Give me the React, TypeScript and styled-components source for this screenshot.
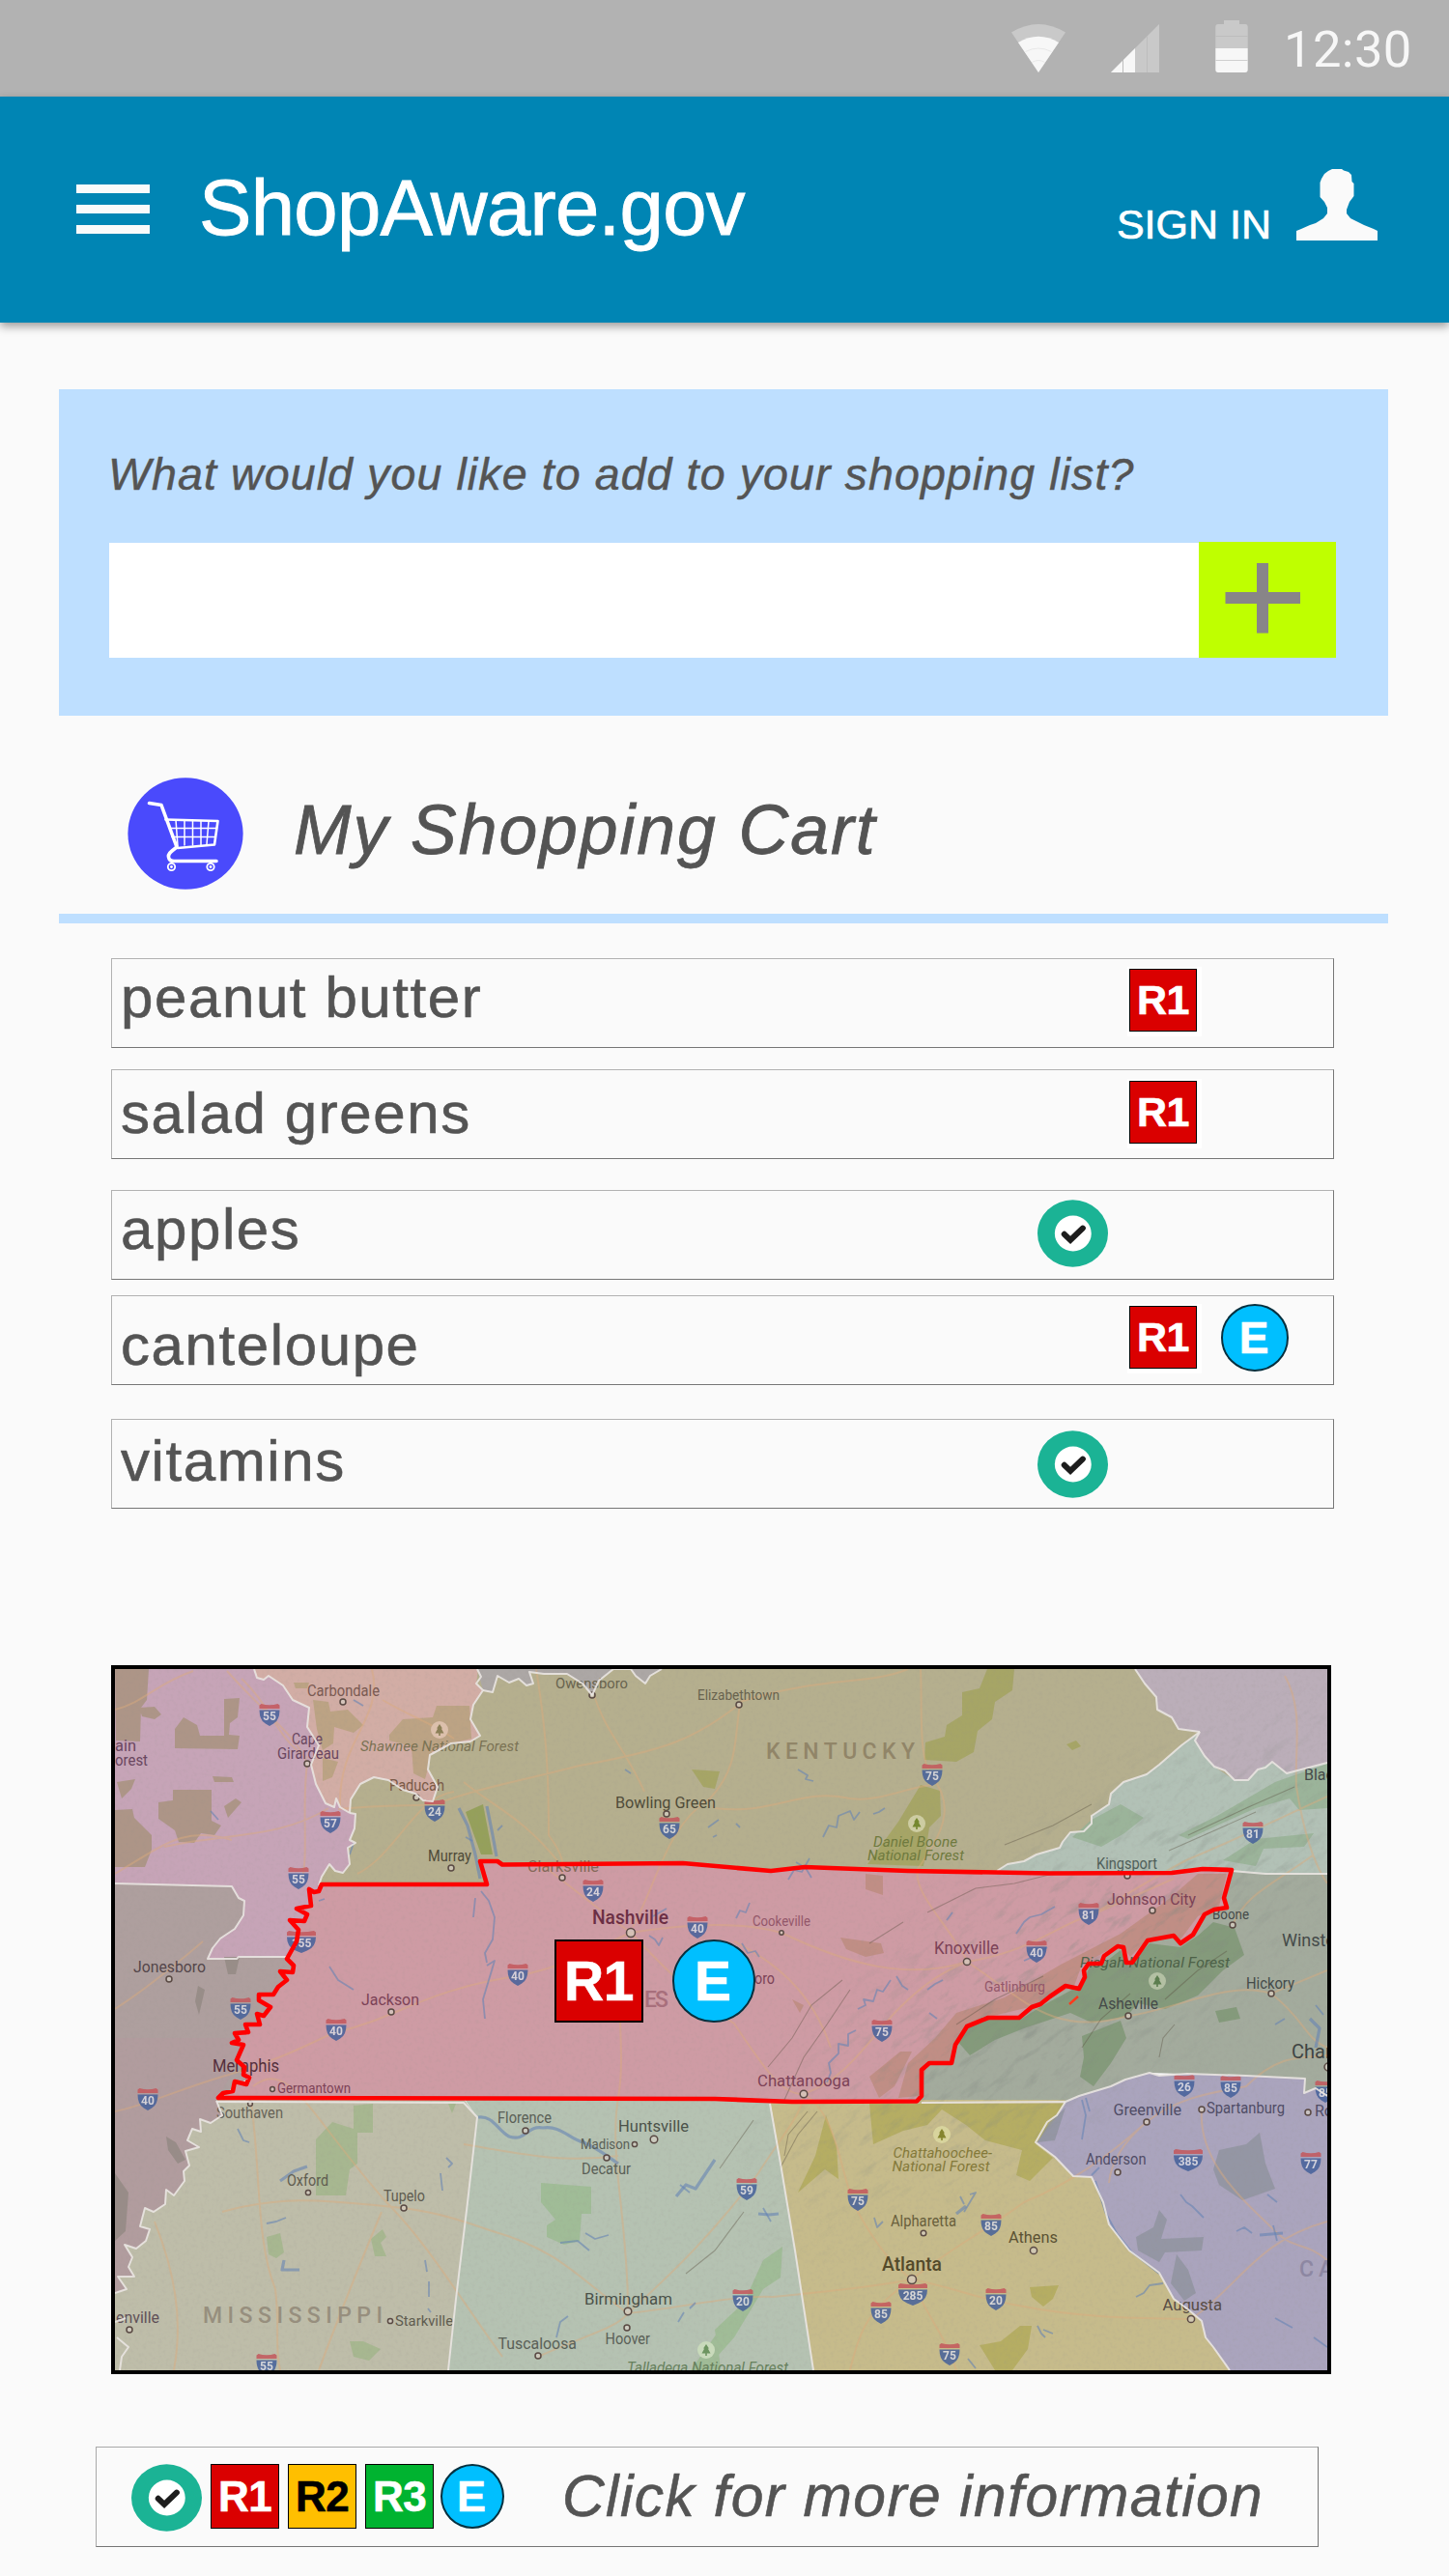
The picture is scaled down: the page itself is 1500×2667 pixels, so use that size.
import React from "react";
import styled, { createGlobalStyle } from "styled-components";

const sans = '"Liberation Sans", Arial, Helvetica, sans-serif';
const ink = "#545454";

const GlobalStyle = createGlobalStyle`
  html, body { margin: 0; padding: 0; background: #fafafa; }
  *, *::before, *::after { box-sizing: border-box; }
  button, input { font: inherit; border: 0; padding: 0; margin: 0; border-radius: 0; outline: 0; }
`;

const Screen = styled.div`
  width: 1500px;
  height: 2667px;
  overflow: hidden;
  background: #fafafa;
  font-family: ${sans};
  color: ${ink};
`;

/* ---------- status bar and app bar ---------- */

const StatusBar = styled.div`
  height: 100px;
  display: flex;
  justify-content: flex-end;
  align-items: flex-start;
  background: #b2b2b2;
`;

const StatusIcons = styled.svg`
  display: block;
  width: 262px;
  height: 100px;
`;

const Clock = styled.span`
  width: 198px;
  padding: 20px 0 0 27px;
  font: 400 52.5px/62px Roboto, sans-serif;
  letter-spacing: 0.4px;
  color: #f7f7f7;
`;

const AppBar = styled.header`
  height: 234px;
  display: flex;
  align-items: flex-start;
  padding: 0 74px 0 79px;
  background: #0085b4;
  box-shadow: 0 4px 9px rgba(0, 0, 0, 0.38);
`;

const MenuButton = styled.button`
  width: 76px;
  height: 51px;
  margin-top: 91px;
  display: flex;
  flex-direction: column;
  justify-content: space-between;
  background: none;
`;

const MenuBar = styled.span`
  height: 9px;
  background: #fafafa;
`;

const AppTitle = styled.h1`
  margin: 74px 0 0 51px;
  flex: 1;
  font-size: 81.5px;
  font-weight: 400;
  line-height: 1;
  letter-spacing: -0.7px;
  color: #fff;
  -webkit-text-stroke: 0.9px currentColor;
`;

const SignIn = styled.span`
  margin-top: 111px;
  font-size: 43px;
  line-height: 1;
  color: #fff;
  -webkit-text-stroke: 0.7px currentColor;
`;

const UserIcon = styled.svg`
  width: 84px;
  height: 74px;
  margin: 75px 0 0 26px;
`;

/* ---------- add panel ---------- */

const Main = styled.main`
  padding-top: 69px;
`;

const AddPanel = styled.section`
  width: 1376px;
  height: 338px;
  margin-left: 61px;
  padding: 65px 54px 0 52px;
  background: #bedfff;
`;

const Prompt = styled.p`
  margin: 0 0 0 -1px;
  font-size: 46.5px;
  font-style: italic;
  line-height: 46px;
  letter-spacing: 1.11px;
  white-space: nowrap;
  -webkit-text-stroke: 0.5px currentColor;
`;

const AddRow = styled.div`
  display: flex;
  align-items: flex-end;
  height: 120px;
  margin-top: 47px;
`;

const AddInput = styled.input`
  width: 1128px;
  height: 119px;
  background: #fff;
`;

const AddButton = styled.button`
  width: 142px;
  height: 120px;
  background: #bfff00;
`;

const PlusIcon = styled.svg`
  display: block;
  width: 142px;
  height: 120px;
`;

/* ---------- cart ---------- */

const CartHeading = styled.div`
  width: 1376px;
  height: 215px;
  margin-left: 61px;
  padding: 64px 0 0 71px;
  display: flex;
  border-bottom: 10px solid #bedfff;
`;

const CartIcon = styled.svg`
  width: 120px;
  height: 116px;
`;

const CartTitle = styled.h2`
  margin: 19px 0 0 52px;
  font-size: 71.5px;
  font-weight: 400;
  font-style: italic;
  line-height: 1;
  letter-spacing: 1.95px;
  -webkit-text-stroke: 0.8px currentColor;
`;

const List = styled.ul`
  list-style: none;
  margin: 36px 0 0 115px;
  padding: 0;
  width: 1266px;
`;

const Item = styled.li<{ $gap: number }>`
  height: 93px;
  margin-bottom: ${(p) => p.$gap}px;
  display: grid;
  grid-template-columns: 957.5px 95.5px 95px 1fr;
  align-items: start;
  border: 1px solid #b2b2b2;
  border-right-color: #767676;
  border-bottom-color: #767676;
`;

const ItemName = styled.span<{ $top: number }>`
  padding: ${(p) => p.$top}px 0 0 9px;
  font-size: 60px;
  line-height: 60px;
  letter-spacing: 1.6px;
  white-space: nowrap;
  -webkit-text-stroke: 0.6px currentColor;
`;

const Slot = styled.span<{ $top: number }>`
  display: block;
  padding-top: ${(p) => p.$top}px;
`;

/* ---------- badges ---------- */

const CheckSvg = styled.svg`
  display: block;
  width: 73px;
  height: 70px;
`;

const LevelBadge = styled.span<{ $w: number; $h: number; $size: number; $tone: string; $fg?: string; $halo?: boolean }>`
  display: flex;
  align-items: center;
  justify-content: center;
  width: ${(p) => p.$w}px;
  height: ${(p) => p.$h}px;
  border: ${(p) => (p.$w > 80 ? 2 : 1.5)}px solid #000;
  background: ${(p) => p.$tone};
  color: ${(p) => p.$fg ?? "#fff"};
  font-size: ${(p) => p.$size}px;
  font-weight: 700;
  line-height: 1;
  letter-spacing: -0.5px;
  -webkit-text-stroke: 0.6px currentColor;
  box-shadow: ${(p) => (p.$halo ? "1.5px 1.5px 0 3.5px #fff" : "none")};
`;

const EventBadge = styled.span<{ $w: number; $h: number; $size: number }>`
  display: flex;
  align-items: center;
  justify-content: center;
  width: ${(p) => p.$w}px;
  height: ${(p) => p.$h}px;
  border: 2px solid #06303f;
  border-radius: 50%;
  background: #00bfff;
  color: #fff;
  font-size: ${(p) => p.$size}px;
  font-weight: 700;
  line-height: 1;
  padding-right: 2px;
  -webkit-text-stroke: 0.6px currentColor;
`;

const CheckBadge = () => (
  <CheckSvg viewBox="0 0 72 70" preserveAspectRatio="none">
    <ellipse cx="36" cy="35" rx="36" ry="34.7" fill="#1bb395" />
    <ellipse cx="36.3" cy="35" rx="18.7" ry="18.5" fill="#fff" />
    <path d="M27.4 35.8 L33.6 41.8 L46.2 29.6" fill="none" stroke="#1d1d1d" strokeWidth="6" strokeLinecap="round" />
  </CheckSvg>
);

/* ---------- map ---------- */

const MapFrame = styled.section`
  position: relative;
  width: 1263px;
  height: 734px;
  margin: 162px 0 0 115px;
  border: 4px solid #000;
  overflow: hidden;
`;

const MapSvg = styled.svg`
  display: block;
  width: 1255px;
  height: 726px;
  font-family: Roboto, sans-serif;
`;

const MapBadges = styled.div`
  position: absolute;
  left: 455px;
  top: 280px;
  display: flex;
  gap: 30px;
`;

const TN =
  "M497 1927 L504 1951 L333 1951 L330 1958 L325 1959 L320 1956 L322 1973 L307 1976 L318 1982 L315 1989 L300 1988 L309 1998 L307 2010 L297 2028 L304 2035 L303 2042 L290 2041 L297 2050 L288 2057 L283 2065 L268 2065 L268 2071 L280 2078 L273 2087 L266 2085 L269 2096 L254 2096 L257 2104 L243 2105 L247 2112 L240 2115 L252 2117 L245 2133 L253 2140 L252 2148 L258 2151 L255 2158 L243 2155 L241 2165 L231 2167 L226 2172 L740 2173 L820 2176 L949 2175.5 L954 2170 L954 2143 L962 2136 L985 2136 L989 2117 L1001 2098 L1023 2089 L1055 2089 L1068 2078 L1077 2075 L1087 2067 L1103 2056 L1117 2059 L1123 2047 L1122 2040 L1127 2033 L1140 2033 L1143 2025 L1157 2015 L1163 2016 L1166 2032 L1172 2032 L1188 2009 L1215 2004 L1222 2012 L1235 2003 L1247 1982 L1257 1977 L1270 1975 L1267 1965 L1275 1936 L1245 1935 L1213 1939 L1087 1939.5 L940 1937 L833 1933 L798 1937 L707 1929 L520 1930.5 L515 1927 Z";

const MO_IL =
  "L263 1728 L266 1737 L273 1739 L278 1735 L293 1745 L303 1760 L320 1768 L318 1788 L330 1807 L322 1827 L327 1847 L337 1867 L346 1871 L348 1862 L352 1871 L362 1877";
const MO_KY =
  "L368 1878 L367 1893 L362 1905 L368 1908 L360 1913 L362 1930 L355 1939 L347 1937 L341 1930 L333 1943 L330 1952";
const IL_KY =
  "L363 1863 L373 1847 L387 1840 L402 1843 L417 1853 L430 1857 L438 1864 L448 1865 L453 1850 L443 1832 L445 1817 L467 1805 L487 1803 L497 1797 L487 1780 L490 1765 L500 1750";
const IN_KY =
  "L500 1750 L510 1752 L515 1735 L527 1742 L537 1738 L545 1745 L552 1743 L548 1731 L563 1733 L587 1733 L603 1743 L613 1755 L620 1740 L635 1728 L653 1728 L658 1735 L668 1743 L673 1735 L685 1728";
const AR_MS =
  "L224 2175 L230 2190 L218 2198 L207 2194 L208 2207 L199 2204 L194 2216 L206 2223 L192 2227 L196 2242 L190 2248 L191 2258 L180 2273 L172 2267 L171 2282 L159 2290 L150 2286 L145 2305 L155 2308 L151 2320 L141 2328 L129 2324 L137 2337 L133 2347 L139 2357 L122 2357 L131 2370 L119 2374";
const KY_VA =
  "L1242 1793 L1223 1807 L1200 1827 L1187 1837 L1163 1845 L1150 1857 L1148 1868 L1130 1880 L1130 1888 L1122 1896 L1108 1897 L1100 1907 L1097 1913 L1073 1920 L1060 1927 L1043 1930 L1032 1937";
const KY_WV = "L1175 1728 L1185 1743 L1197 1757 L1198 1770 L1213 1778 L1220 1790 L1242 1793";
const WV_VA =
  "L1237 1802 L1247 1818 L1257 1829 L1268 1833 L1278 1843 L1292 1843 L1302 1832 L1310 1830 L1317 1824 L1332 1836 L1347 1832 L1374 1825";
const NC_SC =
  "L1103 2176 L1117 2170 L1150 2160 L1165 2153 L1190 2146 L1200 2149 L1229 2147 L1290 2149 L1351 2152 L1350 2167 L1362 2162 L1374 2170";
const GA_SC =
  "L1103 2176 L1094 2190 L1084 2197 L1072 2218 L1092 2233 L1111 2253 L1130 2254 L1142 2280 L1148 2303 L1169 2330 L1200 2353 L1215 2380 L1230 2391 L1244 2403 L1248 2420 L1256 2430 L1273 2454";
const MO_AR =
  "L119 1950 L240 1953 L247 1965 L253 1968 L252 1983 L243 1997 L228 2007 L220 2017 L215 2028 L245 2028 L247 2026 L297 2026";

const start = (line: string) => "M" + line.slice(1);

const regions: [string, string][] = [
  ["#b5af8e", "M119 1728 H1374 V2000 H119 Z"],
  ["#c6a4b7", `M119 1728 ${MO_IL} ${MO_KY} L330 2030 L297 2026 L119 2100 Z`],
  ["#ae9f9e", `${start(MO_AR)} L310 2026 L300 2110 L258 2151 L226 2172 L119 2176 Z`],
  ["#b19c9e", `M119 2110 L260 2110 L226 2172 ${AR_MS} Z`],
  ["#d2ada5", `${start(MO_IL)} ${IL_KY} L493 1743 L495 1728 Z`],
  ["#aca7a5", `${start(IN_KY)} L494 1728 Z`],
  ["#bbaeb9", `${start(KY_WV)} ${WV_VA} L1374 1728 Z`],
  ["#b2c1b6", `${start(KY_VA)} L1275 1940 L1374 1941 L1374 1825 L1347 1832 L1332 1836 L1317 1824 L1302 1832 L1292 1843 L1278 1843 L1257 1829 L1247 1818 L1237 1802 Z`],
  ["#a3ab9d", `M1270 1936 L1310 1940 L1374 1941 L1374 2172 L1362 2162 L1350 2167 L1351 2152 L1290 2149 L1190 2146 L1150 2160 L1103 2176 L945 2177 L945 2100 Z`],
  ["#bebda9", `M224 2172 ${AR_MS} L119 2454 L464 2454 L472 2380 L484 2280 L494 2192 L480 2173 Z`],
  ["#b5c2b2", `M480 2172 L494 2192 L484 2280 L472 2380 L464 2454 L842 2454 L823 2330 L808 2240 L797 2174 Z`],
  ["#c6bb8b", `M797 2174 L808 2240 L823 2330 L842 2454 L1273 2454 L1256 2430 L1248 2420 L1244 2403 L1215 2380 L1200 2353 L1169 2330 L1148 2303 L1142 2280 L1130 2254 L1111 2253 L1092 2233 L1072 2218 L1084 2197 L1094 2190 L1103 2174 Z`],
  ["#aaa4bd", `${start(NC_SC)} L1374 2454 L1273 2454 L1256 2430 L1248 2420 L1244 2403 L1215 2380 L1200 2353 L1169 2330 L1148 2303 L1142 2280 L1130 2254 L1111 2253 L1092 2233 L1072 2218 L1084 2197 L1094 2190 Z`],
  ["#ce9ba4", TN],
];

const borders = [
  start(MO_IL), `M362 1877 ${MO_KY}`, `M362 1877 ${IL_KY} L493 1743 L498 1736 L494 1728`, start(IN_KY), start(MO_AR), start(AR_MS),
  start(KY_VA), start(KY_WV), `M1242 1793 ${WV_VA}`, start(NC_SC), start(GA_SC),
  "M1275 1937 L1310 1940 L1374 1940", "M954 2177 L1103 2176", "M224 2176 L480 2177 L494 2192 L484 2280 L472 2380 L464 2454",
  "M797 2178 L808 2240 L823 2330 L842 2454", "M130 2400 L119 2404 M121 2420 L133 2430 L126 2440 L124 2454",
];

const parks: [string, string][] = [
  ["#a8937f", "M119 1728 L154 1728 L152 1760 L146 1768 L145 1803 L120 1802 Z M144 1768 L160 1767 L167 1775 L160 1780 L147 1777 Z M232 1759 L248 1758 L246 1778 L238 1784 L237 1796 L248 1797 L246 1811 L181 1810 L181 1790 L190 1778 L204 1786 L207 1797 L232 1797 Z M179 1853 L219 1853 L219 1885 L229 1890 L222 1900 L208 1898 L201 1908 L185 1907 L181 1895 L164 1883 L164 1866 L179 1864 Z M119 1874 L137 1873 L139 1882 L157 1900 L157 1915 L150 1933 L119 1933 Z M232 1870 L244 1862 L250 1866 L236 1882 Z M220 1839 L240 1840 L242 1845 L222 1845 Z M121 1845 L140 1842 L136 1852 L126 1862 Z"],
  ["#b8a17e", "M324 1760 L340 1762 L342 1772 L360 1770 L376 1786 L366 1794 L346 1788 L345 1805 L334 1812 L328 1790 Z M334 1820 L350 1824 L344 1840 L334 1844 Z M403 1796 L417 1780 L448 1778 L452 1766 L486 1766 L488 1800 L463 1806 L448 1812 L440 1842 L428 1836 L426 1808 L403 1802 Z M304 1742 L320 1742 L318 1748 L306 1748 Z"],
  ["#a3a35f", "M1022 1728 L1050 1728 L1048 1750 L1030 1762 L1027 1780 L1012 1792 L1008 1814 L990 1824 L957 1822 L958 1804 L978 1798 L980 1786 L996 1776 L996 1752 L1014 1748 Z M953 1848 L973 1854 L974 1880 L962 1892 L956 1932 L898 1930 L930 1886 Z M716 1832 L745 1834 L740 1852 L728 1850 Z M1104 1806 L1114 1802 L1119 1808 L1110 1812 Z"],
  ["#8f9e52", "M482 1876 L500 1868 L510 1920 L498 1920 Z"],
  ["#96b295", "M1130 1884 L1160 1868 L1184 1882 L1164 1898 L1140 1912 L1110 1902 Z M1220 1900 L1260 1880 L1320 1845 L1374 1826 L1374 1872 L1345 1874 L1335 1862 L1300 1872 L1260 1890 L1230 1904 Z M1266 1926 L1300 1904 L1360 1898 L1350 1912 L1308 1914 L1300 1932 Z"],
  ["#7f9675", "M990 2112 L1003 2098 L1023 2091 L1056 2091 L1080 2076 L1110 2060 L1118 2061 L1128 2036 L1146 2030 L1160 2019 L1168 2036 L1190 2012 L1222 2016 L1240 2004 L1256 1990 L1278 1996 L1288 2024 L1266 2040 L1240 2066 L1206 2080 L1178 2074 L1166 2088 L1130 2094 L1108 2084 L1060 2100 L1030 2112 L1004 2128 Z M1120 2108 L1160 2092 L1166 2110 L1150 2136 L1132 2160 L1118 2150 L1122 2130 Z M1258 2082 L1280 2078 L1284 2090 L1262 2094 Z"],
  ["#bd8c80", "M1240 1940 L1270 1940 L1262 1974 L1240 1984 L1222 2008 L1190 2006 L1170 2026 L1160 2012 L1120 2034 L1112 2056 L1066 2078 L1024 2088 L1000 2096 L984 2134 L960 2136 L952 2170 L930 2172 L940 2136 L968 2110 L990 2084 L1040 2068 L1098 2034 L1160 2002 L1210 1966 Z M870 2006 L912 2012 L915 2022 L896 2026 L876 2018 Z M896 1940 L914 1942 L914 1962 L896 1956 Z M820 2070 L832 2076 L828 2084 Z M900 2150 L932 2124 L944 2124 L926 2160 L910 2172 Z"],
  ["#a3b68c", "M366 2180 L386 2178 L386 2208 L370 2208 L370 2240 L362 2246 L358 2273 L327 2273 L327 2215 L344 2197 L366 2204 Z M276 2316 L290 2312 L294 2332 L286 2338 L278 2334 Z M384 2318 L396 2308 L400 2316 L394 2322 L400 2336 L388 2336 Z M362 2424 L376 2424 L394 2432 L382 2444 L366 2440 Z M464 2178 L472 2178 L468 2188 Z"],
  ["#9cbb92", "M560 2260 L612 2264 L612 2292 L602 2292 L600 2320 L584 2324 L566 2316 L566 2304 L575 2298 L560 2280 Z M790 2340 L810 2326 L808 2358 L790 2370 L760 2420 L744 2438 L740 2412 L770 2384 Z M715 2454 L742 2416 L746 2454 Z"],
  ["#b1aa5c", "M900 2178 L1102 2178 L1094 2192 L1072 2220 L1090 2234 L1066 2258 L1052 2252 L1058 2226 L1020 2216 L1000 2200 L975 2184 L960 2200 L935 2206 L904 2220 Z M855 2190 L866 2222 L868 2256 L854 2246 L826 2270 L844 2232 Z M1066 2368 L1096 2366 L1090 2380 L1080 2388 L1068 2378 Z M1014 2428 L1036 2424 L1056 2408 L1068 2408 L1064 2432 L1048 2454 L1030 2454 Z"],
  ["#9094a0", "M1103 2182 L1092 2216 L1074 2218 L1086 2198 Z M1262 2226 L1290 2220 L1304 2208 L1310 2240 L1320 2266 L1286 2278 L1262 2262 L1256 2246 Z M1200 2288 L1208 2298 L1202 2318 L1246 2316 L1244 2330 L1206 2332 L1200 2342 L1178 2330 L1176 2316 L1194 2306 Z M1218 2334 L1230 2350 L1238 2374 L1226 2382 L1212 2364 Z"],
  ["#948a84", "M232 2026 L248 2026 L244 2044 L236 2044 Z M205 2056 L212 2060 L206 2086 L202 2072 Z M172 2212 L182 2218 L192 2236 L184 2240 L174 2226 Z M119 2250 L133 2270 L130 2310 L119 2320 Z"],
];

const roads =
  "M119 1770 C150 1762 160 1744 200 1730 M235 1730 C270 1770 310 1800 318 1826 C312 1870 320 1920 312 1950 M170 1912 C230 1898 290 1904 340 1872 M119 1940 C170 1910 190 1890 240 1905 M250 1738 C280 1765 286 1800 318 1820 M385 1728 C398 1780 350 1800 352 1870 M396 1760 C430 1780 440 1780 470 1800 M350 1873 C400 1868 430 1870 450 1868 C500 1850 530 1846 600 1828 C690 1812 720 1800 766 1764 M555 1728 C565 1790 568 1830 568 1900 C590 1930 580 1935 582 1944 M615 1755 C625 1790 650 1815 667 1855 M766 1765 C760 1800 765 1830 735 1862 C690 1890 680 1950 655 1995 M740 1872 C800 1880 830 1850 880 1862 C910 1866 940 1850 965 1848 M480 1845 C510 1870 540 1880 580 1930 M370 1940 C410 1920 430 1860 470 1855 M953 1728 C955 1770 950 1820 965 1840 C990 1870 975 1900 950 1935 C945 1960 980 1990 1001 2030 M766 1762 C850 1735 900 1745 940 1728 M119 2080 C150 2060 175 2040 210 2010 M119 2186 C150 2180 180 2165 230 2150 C300 2130 330 2110 348 2104 C410 2090 440 2060 535 2046 C590 2035 620 2015 653 2001 C720 1990 770 1990 809 2001 C880 2035 940 2050 1001 2031 C1070 2020 1100 1990 1127 1984 L1215 1945 M653 2001 C690 2040 720 2070 760 2095 C790 2140 810 2170 832 2168 M653 2001 C630 2060 650 2110 640 2172 C630 2230 650 2300 650 2390 M653 2001 C610 1970 600 1960 560 1930 M832 2168 C880 2150 900 2110 930 2080 C960 2050 980 2040 1001 2031 C1060 2070 1090 2110 1168 2087 C1220 2080 1270 2050 1316 2064 L1374 2040 M260 2176 C270 2250 265 2320 285 2370 C290 2410 284 2430 290 2454 M262 2160 C300 2130 320 2190 400 2280 C440 2320 470 2370 520 2440 M230 2290 C300 2270 350 2280 418 2286 C460 2292 480 2300 510 2310 C580 2330 600 2360 650 2395 C700 2350 740 2310 785 2250 C810 2210 830 2190 832 2168 C870 2190 870 2260 888 2290 C910 2330 930 2350 944 2360 C960 2400 980 2420 990 2454 M650 2395 C700 2390 760 2376 800 2378 C860 2372 900 2368 944 2360 C980 2366 1010 2380 1060 2388 C1120 2400 1180 2400 1233 2401 M944 2360 C980 2330 1020 2310 1060 2280 C1110 2260 1150 2230 1187 2197 C1220 2170 1260 2166 1290 2160 C1320 2130 1340 2130 1374 2128 M557 2440 C600 2420 640 2410 650 2395 M944 2360 C900 2390 890 2410 880 2454 M1244 2184 C1240 2240 1290 2280 1320 2310 C1340 2330 1350 2320 1374 2340 M1233 2401 C1280 2370 1300 2320 1374 2300 M1187 2197 C1160 2220 1150 2240 1148 2260 M1374 1860 C1330 1880 1290 1900 1230 1925 C1200 1940 1170 1960 1127 1984 M1330 1735 C1350 1770 1340 1810 1342 1850 C1350 1900 1360 1930 1374 1950 M1276 1993 C1290 1960 1320 1950 1360 1920 M860 2120 C840 2060 800 2030 760 2010 M480 2220 C540 2230 580 2240 640 2232 M1316 2064 C1350 2090 1350 2110 1374 2120 M160 2300 C180 2350 190 2400 180 2454 M395 2290 C370 2350 350 2400 330 2454";

/* wide lakes and the Tennessee River */
const lakes =
  "M475 1872 L484 1890 L492 1920 L497 1945 M504 1870 L510 1900 L514 1922 M495 2192 C510 2190 515 2205 527 2212 C545 2218 545 2200 562 2203 C580 2200 590 2215 604 2218 C620 2225 625 2230 640 2240 M700 2274 L710 2262 L720 2266 L740 2236 M290 2258 L304 2248 L318 2243 M294 2340 L292 2350 L310 2350 M785 2292 L796 2293 L806 2292 M1304 2314 L1328 2312 M990 2292 L1000 2284 M1356 2090 L1366 2100 L1362 2120";

const water =
  "M515 1895 L520 1890 M482 1902 L489 1906 M498 1958 L506 1968 L512 1985 L510 2008 L502 2022 L504 2032 M504 2035 L512 2030 L506 2050 L500 2070 L502 2090 M492 1965 L490 1985 M704 2262 L714 2270 M246 2204 L252 2216 L258 2218 M276 2302 L286 2300 L296 2296 M462 2234 L468 2240 L464 2244 M440 2340 L442 2352 M444 2362 L444 2378 M443 2390 L446 2394 M456 2250 L458 2268 M580 2322 L598 2320 L610 2330 M606 2312 L616 2318 L630 2314 M702 2404 L708 2394 M714 2390 L720 2384 M576 2420 L580 2404 L588 2398 M790 2286 L798 2300 M852 1902 L858 1890 L866 1892 L868 1880 L880 1875 L884 1884 L890 1876 M904 1878 L910 1876 L916 1872 M826 1832 L836 1838 L834 1842 L842 1844 M733 1892 L744 1884 M738 1902 L742 1900 M816 1946 L822 1936 L830 1938 L838 1924 M824 1928 L834 1934 L840 1944 M762 1986 L766 1978 L772 1980 L776 1970 M672 2004 L678 2008 L682 2014 L686 2006 M768 2012 L774 2022 L782 2020 L786 2026 M676 1984 L690 1976 M888 2080 L896 2076 L894 2070 L904 2072 L908 2060 L914 2062 L922 2050 M928 2046 L934 2056 L940 2060 M856 2156 L860 2146 L858 2136 L868 2126 L868 2116 L878 2118 L878 2106 L886 2102 M980 1988 L986 1980 M1052 2002 L1060 1990 L1066 1985 L1078 1982 L1092 1974 M1060 2030 L1074 2024 L1084 2016 M960 2060 L968 2054 L976 2050 M962 2084 L970 2090 M1120 2174 L1124 2190 L1120 2215 M1124 2172 L1128 2186 M1130 2252 L1134 2248 L1138 2244 M1134 2258 L1144 2290 L1156 2312 L1172 2332 L1200 2354 M998 2290 L1010 2270 L1004 2272 M994 2274 L998 2282 M905 2296 L908 2306 L914 2300 M1176 2378 L1184 2374 L1190 2366 L1204 2364 M1222 2272 L1228 2280 L1234 2284 L1246 2296 M1280 2310 L1288 2306 L1296 2312 M1318 2304 L1322 2320 M1312 2272 L1322 2280 M1362 2076 L1370 2086 M1320 2096 L1330 2090 M1074 2408 L1078 2416 L1082 2420 M1080 2412 L1090 2416 M1002 2442 L1010 2452 M1320 2400 L1338 2410 M1360 2420 L1374 2430 M218 1875 L226 1884 M330 1968 L336 1966 M362 1920 L366 1908 M647 1832 L653 1836 M762 1888 L766 1892 M341 2036 L350 2050 L366 2060 M366 1760 L376 1766";

const ridges =
  "M795 2140 L820 2110 L840 2076 L872 2050 M812 2174 L832 2130 L856 2096 L880 2060 M808 2244 L826 2210 L846 2186 M812 2232 L816 2210 L836 2186 M960 1980 L1010 1955 L1050 1950 L1090 1940 M1040 1910 L1090 1890 L1130 1868 M1210 1916 L1260 1894 L1300 1876 M1230 1900 L1290 1872 L1340 1850 M900 2012 L935 1990 M1200 2130 L1204 2110 L1216 2096 M710 2354 L740 2330 L770 2290 M745 2245 L780 2195 M990 2096 L1030 2070 L1080 2046 M1120 2120 L1140 2090 L1170 2064 M1206 2070 L1240 2040 L1270 2020";

type Shield = [number, number, string];
const shields: Shield[] = [
  [279, 1776, "55"], [342, 1887, "57"], [450, 1875, "24"], [309, 1945, "55"], [312, 2011, "155"], [249, 2080, "55"],
  [348, 2102, "40"], [536, 2045, "40"], [693, 1893, "65"], [614, 1958, "24"], [722, 1996, "40"], [913, 2103, "75"],
  [965, 1838, "75"], [1297, 1898, "81"], [1127, 1982, "81"], [1073, 2021, "40"], [153, 2174, "40"], [276, 2449, "55"],
  [773, 2267, "59"], [888, 2278, "75"], [1026, 2304, "85"], [769, 2382, "20"], [945, 2376, "285"], [1031, 2381, "20"],
  [912, 2395, "85"], [983, 2438, "75"], [1226, 2160, "26"], [1274, 2161, "85"], [1230, 2237, "385"], [1357, 2240, "77"], [1372, 2166, "85"],
];

const olive = "#4f4b39";
const plum = "#6a4760";
const wine = "#7c4257";
const slate = "#454a49";
const forest = "#6f7a3e";

/* x, baseline, text, drawn width (0 keeps the natural one), size, colour, style */
type Place = [number, number, string, number, number, string, string?];
const places: Place[] = [
  [318, 1756, "Carbondale", 75, 16, "#7a5a52"], [302, 1806, "Cape", 32, 16, plum], [287, 1820.5, "Girardeau", 64, 16, plum],
  [373, 1813, "Shawnee National Forest", 164, 15.5, "#7b7355", "italic"], [403, 1854, "Paducah", 57, 16, "#7a5a48"],
  [443, 1927, "Murray", 45, 16, olive], [119, 1812.5, "ain", 22, 16, plum], [119, 1828, "orest", 34, 16, plum],
  [138, 2042, "Jonesboro", 75, 16.5, "#54464a"], [374, 2075.5, "Jackson", 60, 16.5, wine],
  [575, 1748, "Owensboro", 75, 15.5, "#68634e"], [722, 1760, "Elizabethtown", 85, 15.5, "#68634e"],
  [793, 1820.5, "KENTUCKY", 159, 23, "#918568", "state"], [637, 1872, "Bowling Green", 104, 17, olive],
  [904, 1911.5, "Daniel Boone", 87, 15.5, forest, "italic"], [898, 1926, "National Forest", 100, 15.5, forest, "italic"],
  [546, 1937.5, "Clarksville", 74, 16, "#85695a"], [613, 1991.5, "Nashville", 79, 20, "#6b2f45", "bold"],
  [779, 1994, "Cookeville", 60, 15, "#93576a"], [781, 2054, "oro", 21, 16, wine], [667, 2077.5, "ES", 30, 23, "#a86f7c", "state"],
  [1135, 1935, "Kingsport", 63, 16, "#50605a"], [1146, 1971.5, "Johnson City", 92, 16.5, wine],
  [1255, 1986.5, "Boone", 38, 15.5, slate], [1327, 2015, "Winston", 0, 18, slate], [1290, 2059, "Hickory", 50, 16, slate],
  [1137, 2079.5, "Asheville", 62, 16.5, slate], [1118, 2036.5, "Pisgah National Forest", 155, 15.5, "#4d6148", "italic"],
  [967, 2023, "Knoxville", 67, 17.5, wine], [1019, 2062, "Gatlinburg", 63, 15.5, "#93576a"], [1350, 1843, "Blacks", 0, 16, slate],
  [220, 2145, "Memphis", 69, 18, "#542f3c"], [287, 2166.5, "Germantown", 76, 14.5, wine], [224, 2192.5, "Southaven", 69, 16, "#686357"],
  [515, 2197.5, "Florence", 56, 16, "#5a6057"], [640, 2207, "Huntsville", 73, 17, "#4b524a"], [601, 2225, "Madison", 51, 15, "#5a6057"],
  [602, 2250.5, "Decatur", 51, 16, "#5a6057"], [297, 2262.5, "Oxford", 43, 16, "#5f5c50"], [397, 2279, "Tupelo", 43, 16, "#5f5c50"],
  [605, 2385.5, "Birmingham", 91, 17, "#4b524a"], [409, 2408, "Starkville", 60, 15.5, "#5f5c50"],
  [210, 2405, "MISSISSIPPI", 191, 23, "#978f7e", "state"], [120, 2405, "enville", 45, 16, "#5f5058"],
  [515.5, 2431.5, "Tuscaloosa", 81.5, 16.5, "#5a6057"], [626.5, 2427, "Hoover", 46.5, 16, "#5a6057"],
  [649, 2457, "Talladega National Forest", 167, 16, "#66805c", "italic"], [784, 2159.5, "Chattanooga", 96, 17, wine],
  [1152.5, 2189.5, "Greenville", 70.5, 16, "#504d66"], [1249, 2188, "Spartanburg", 81, 16, "#504d66"],
  [1361, 2191, "Rock", 0, 16, "#504d66"], [1337, 2131, "Charlotte", 0, 20, "#3f4443"], [1124, 2240.5, "Anderson", 62.5, 16, "#504d66"],
  [924.5, 2233.5, "Chattahoochee-", 102.5, 15.5, "#84793a", "italic"], [923.5, 2247.5, "National Forest", 101, 15.5, "#84793a", "italic"],
  [922, 2305, "Alpharetta", 68, 16, "#695f3c"], [1044, 2322, "Athens", 51, 16.5, "#5b5234"], [913, 2350.5, "Atlanta", 62, 20, "#544a2a", "bold"],
  [1203.5, 2391.5, "Augusta", 61.5, 16.5, "#574c45"], [1345, 2356.5, "CAR", 0, 23, "#8d87a2", "state"],
];

const towns: [number, number, number?][] = [
  [355, 1762], [175, 2049], [405, 2083], [467, 1934], [431, 1861], [318, 1826], [613, 1755], [765, 1765], [690, 1878], [582, 1944],
  [653, 2001, 4.5], [809, 2001, 2.2], [1167, 1942], [1193, 1978], [1276, 1993], [1001, 2031, 3.6], [1316, 2064], [1168, 2087], [282, 2163, 2.4],
  [259, 2178, 2.4], [544, 2206], [677, 2215, 3.8], [657, 2220, 2.6], [628, 2234], [319, 2270, 2.6], [418, 2286], [650, 2393, 3.8], [649, 2410],
  [557, 2439], [404, 2403, 2.6], [134, 2412], [832, 2168, 3.8], [1187, 2197], [1244, 2184], [1354, 2187], [1157, 2249], [956, 2312, 2.8],
  [1070, 2330, 3.6], [944, 2360, 4.5], [1233, 2401, 3.6], [1375, 2140, 4],
];

const trees: [number, number, string, string][] = [
  [455, 1791, "#dcc0ac", "#8b7f57"], [949, 1888, "#cdcca2", "#75882f"], [1198, 2051, "#b3c0a3", "#5c7d4f"],
  [975, 2210, "#d8d49d", "#85852f"], [731, 2433, "#c9dabb", "#6d9460"],
];

const RoadShield = ({ x, y, label }: { x: number; y: number; label: string }) => {
  const w = label.length > 2 ? 15 : 10.5;
  return (
    <g transform={`translate(${x} ${y})`} opacity="0.85">
      <path d={`M${-w} -10.5 L${-w + 2} -12 Q0 -9.5 ${w - 2} -12 L${w} -10.5 L${w} -7 L${-w} -7 Z`} fill="#c4575c" />
      <path d={`M${-w} -5.5 H${w} Q${w} 5 ${w * 0.4} 8.5 L0 11 L${-w * 0.4} 8.5 Q${-w} 5 ${-w} -5.5 Z`} fill="#45619b" />
      <text y="5" textAnchor="middle" fontSize="12" fontWeight="700" fill="#d9dae2">{label}</text>
    </g>
  );
};

const RegionMap = () => (
  <MapSvg viewBox="119 1728 1255 726">
    <defs>
      <filter id="relief" x="0" y="0" width="100%" height="100%">
        <feTurbulence type="fractalNoise" baseFrequency="0.035 0.12" numOctaves="4" seed="7" />
        <feColorMatrix values="0 0 0 0 0.22  0 0 0 0 0.25  0 0 0 0 0.22  3.4 0 0 0 -1.85" />
      </filter>
      <filter id="grain" x="0" y="0" width="100%" height="100%">
        <feTurbulence type="fractalNoise" baseFrequency="0.25" numOctaves="2" seed="3" />
        <feColorMatrix values="0 0 0 0 0.3  0 0 0 0 0.28  0 0 0 0 0.26  1.4 0 0 0 -0.66" />
      </filter>
      <radialGradient id="peaks" gradientUnits="userSpaceOnUse" cx="0" cy="0" r="1" gradientTransform="translate(1110 2040) rotate(-38) scale(460 170)">
        <stop offset="0.2" stopColor="#fff" />
        <stop offset="1" stopColor="#000" />
      </radialGradient>
      <mask id="mountains" maskUnits="userSpaceOnUse" x="119" y="1728" width="1255" height="726">
        <rect x="119" y="1728" width="1255" height="726" fill="url(#peaks)" />
      </mask>
    </defs>
    {regions.map(([fill, d]) => <path key={d} d={d} fill={fill} />)}
    {parks.map(([fill, d]) => <path key={d} d={d} fill={fill} opacity="0.85" />)}
    <g mask="url(#mountains)">
      <g transform="rotate(-38 1100 2000)"><rect x="500" y="1450" width="1200" height="1100" filter="url(#relief)" opacity="0.42" /></g>
    </g>
    <rect x="119" y="1728" width="1255" height="726" filter="url(#grain)" opacity="0.2" />
    <path d={roads} fill="none" stroke="#dcaa7c" strokeWidth="2" opacity="0.45" />
    <path d={ridges} fill="none" stroke="#5a5140" strokeWidth="1.1" opacity="0.4" />
    <path d={lakes} fill="none" stroke="#6583b4" strokeWidth="3.2" strokeLinejoin="round" opacity="0.6" />
    <path d={water} fill="none" stroke="#6583b4" strokeWidth="1.8" strokeLinejoin="round" opacity="0.6" />
    {places.map(([x, y, text, width, size, fill, kind]) => (
      <text
        key={`${text}${x}`} x={x} y={y} fontSize={size} fill={fill}
        fontStyle={kind === "italic" ? "italic" : undefined}
        fontWeight={kind === "bold" || kind === "state" ? 500 : 400}
        letterSpacing={kind === "state" ? 5 : undefined}
        textLength={width || undefined}
        lengthAdjust={kind === "state" ? "spacing" : "spacingAndGlyphs"}
      >{text}</text>
    ))}
    {towns.map(([x, y, r = 3]) => <circle key={`${x}-${y}`} cx={x} cy={y} r={r} fill="#d5cfc4" fillOpacity="0.7" stroke="#5a4a44" strokeWidth="1.5" />)}
    {trees.map(([x, y, disc, leaf]) => (
      <g key={x} transform={`translate(${x} ${y})`}>
        <circle r="9" fill={disc} />
        <path d="M0 -6 L3 -1.5 H1.8 L4.5 3.5 H0.8 V6 H-0.8 V3.5 H-4.5 L-1.8 -1.5 H-3 Z" fill={leaf} />
      </g>
    ))}
    {shields.map(([x, y, label]) => <RoadShield key={`${x}-${y}`} x={x} y={y} label={label} />)}
    {borders.map((d) => <path key={d} d={d} fill="none" stroke="#e9e4e1" strokeWidth="2" strokeLinejoin="round" opacity="0.9" />)}
    <path d={TN} fill="none" stroke="#ff0000" strokeWidth="4.6" strokeLinejoin="round" />
    <path d="M1107 2075 L1116 2067" stroke="#ff3a1c" strokeWidth="2.5" />
  </MapSvg>
);

/* ---------- legend ---------- */

const Legend = styled.button`
  width: 1266px;
  height: 104px;
  margin: 75px 0 0 99px;
  padding: 17px 0 0 36px;
  display: flex;
  align-items: flex-start;
  background: none;
  color: inherit;
  border: 1px solid #a9a9a9;
  border-right-color: #767676;
  border-bottom: 1.5px solid #767676;
`;

const LegendLevels = styled.span`
  display: flex;
  gap: 9px;
  margin: 0 7px 0 9px;
`;

const LegendText = styled.span`
  margin: 3px 0 0 60px;
  font-size: 60.5px;
  font-style: italic;
  line-height: 1;
  letter-spacing: 1.42px;
  white-space: nowrap;
  -webkit-text-stroke: 0.6px currentColor;
`;

type CartItem = { name: string; gap: number; text: number; check?: number; recall?: number; event?: number };

const cart: CartItem[] = [
  { name: "peanut butter", gap: 22, text: 10, recall: 10 },
  { name: "salad greens", gap: 32, text: 15, recall: 11 },
  { name: "apples", gap: 16, text: 10, check: 9 },
  { name: "canteloupe", gap: 35, text: 21, recall: 10, event: 8 },
  { name: "vitamins", gap: 0, text: 13, check: 11 },
];

export default function App() {
  return (
    <Screen>
      <GlobalStyle />
      <StatusBar>
        <StatusIcons viewBox="1040 0 262 100">
          <path d="M1075 75 L1047 33.5 Q1075 16.5 1103 33.5 Z" fill="#c9c9c9" />
          <path d="M1075 75 L1054 44 Q1075 31.5 1096 44 Z" fill="#f7f7f7" />
          <path d="M1061.5 53.5 Q1075 46.5 1088.5 53.5 M1068.5 64.5 Q1075 60.5 1081.5 64.5" fill="none" stroke="#e3e3e3" strokeWidth="0.8" />
          <path d="M1150 75 L1200 25 V75 Z" fill="#c9c9c9" />
          <path d="M1150 75 L1175 50 V75 Z" fill="#f7f7f7" />
          <path d="M1162.5 62 V75 M1187.5 37 V75" stroke="#bdbdbd" strokeWidth="1" />
          <path d="M1267 25 V21 H1283 V25 H1289 Q1291.7 25 1291.7 28 V50 H1258.3 V28 Q1258.3 25 1261 25 Z" fill="#c9c9c9" />
          <path d="M1258.3 50 H1291.7 V72 Q1291.7 75 1289 75 H1261 Q1258.3 75 1258.3 72 Z" fill="#f7f7f7" />
          <path d="M1258.3 37.5 H1291.7" stroke="#bdbdbd" strokeWidth="1" />
          <path d="M1258.3 62.5 H1291.7" stroke="#cfcfcf" strokeWidth="1" />
        </StatusIcons>
        <Clock>12:30</Clock>
      </StatusBar>
      <AppBar>
        <MenuButton aria-label="Menu"><MenuBar /><MenuBar /><MenuBar /></MenuButton>
        <AppTitle>ShopAware.gov</AppTitle>
        <SignIn>SIGN IN</SignIn>
        <UserIcon viewBox="0 0 84 74">
          <path
            d="M37 0 H47 L49 1.5 L54 3 L57 6 L57.5 13 L59.5 15 V28 L55 34 L52 42 V46 L56 51 L62 54 L70 58 L80 62 L84 64 V74 H0 V64 L5 62 L14 58 L20 56 L28 51 L32 46 V40 L29 34 L24.5 29 V14 L26 10 L29 5 L33 2 Z"
            fill="#fafafa"
          />
        </UserIcon>
      </AppBar>
      <Main>
        <AddPanel>
          <Prompt>What would you like to add to your shopping list?</Prompt>
          <AddRow>
            <AddInput aria-label="Item" />
            <AddButton aria-label="Add">
              <PlusIcon viewBox="0 0 142 120">
                <path d="M27.5 58 H105 M66 22 V94.5" fill="none" stroke="#888588" strokeWidth="12" />
              </PlusIcon>
            </AddButton>
          </AddRow>
        </AddPanel>
        <CartHeading>
          <CartIcon viewBox="0 0 120 116">
            <ellipse cx="60" cy="58" rx="59.6" ry="57.8" fill="#4a4afc" />
            <g fill="none" stroke="#fff" strokeLinecap="round" strokeLinejoin="round">
              <path d="M22.5 26.5 L35 28.5 L51 72 L46 76 Q41 80 43 84 Q44 86.5 48 86.5 H92" strokeWidth="3.6" />
              <path d="M39.5 43.5 L93.5 45 L90 69.5 L52 73" strokeWidth="2.6" />
              <path d="M43 52.5 H92 M46 61.5 H91 M50 44 L52 71 M59 44 V70 M67.5 44 V70 M76 44.5 V70 M84 45 L82 69" strokeWidth="1.5" />
              <circle cx="45.5" cy="92.5" r="3.7" strokeWidth="1.8" />
              <circle cx="86" cy="92.5" r="3.7" strokeWidth="1.8" />
            </g>
            <circle cx="45.5" cy="92.5" r="1.4" fill="#fff" />
            <circle cx="86" cy="92.5" r="1.4" fill="#fff" />
          </CartIcon>
          <CartTitle>My Shopping Cart</CartTitle>
        </CartHeading>
        <List>
          {cart.map((item) => (
            <Item key={item.name} $gap={item.gap}>
              <ItemName $top={item.text}>{item.name}</ItemName>
              <Slot $top={item.check ?? 0}>{item.check && <CheckBadge />}</Slot>
              <Slot $top={item.recall ?? 0}>
                {item.recall && <LevelBadge $w={70} $h={65} $size={43} $tone="#da0000" $halo>R1</LevelBadge>}
              </Slot>
              <Slot $top={item.event ?? 0}>{item.event && <EventBadge $w={70} $h={70} $size={46}>E</EventBadge>}</Slot>
            </Item>
          ))}
        </List>
        <MapFrame>
          <RegionMap />
          <MapBadges>
            <LevelBadge $w={92} $h={86} $size={57} $tone="#da0000">R1</LevelBadge>
            <EventBadge $w={86} $h={86} $size={57}>E</EventBadge>
          </MapBadges>
        </MapFrame>
        <Legend>
          <CheckBadge />
          <LegendLevels>
            <LevelBadge $w={71} $h={67} $size={44} $tone="#da0000">R1</LevelBadge>
            <LevelBadge $w={71} $h={67} $size={44} $tone="#ffbf00" $fg="#000">R2</LevelBadge>
            <LevelBadge $w={71} $h={67} $size={44} $tone="#00b330">R3</LevelBadge>
          </LegendLevels>
          <EventBadge $w={66} $h={67} $size={45}>E</EventBadge>
          <LegendText>Click for more information</LegendText>
        </Legend>
      </Main>
    </Screen>
  );
}
